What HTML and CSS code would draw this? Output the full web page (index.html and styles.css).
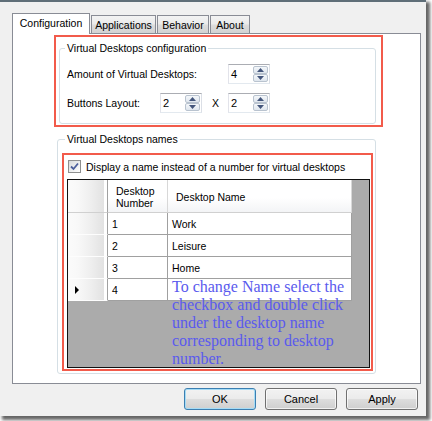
FILE: index.html
```html
<!DOCTYPE html>
<html>
<head>
<meta charset="utf-8">
<link rel="stylesheet" href="styles.css">
</head>
<body>
<div class="window">
  <div class="tabs">
    <div class="tab tab-active">Configuration</div>
    <div class="tab tab-apps">Applications</div>
    <div class="tab tab-beh">Behavior</div>
    <div class="tab tab-about">About</div>
  </div>
  <div class="panel">
    <div class="mark mark-config">
      <fieldset class="group group-config">
        <legend>Virtual Desktops configuration</legend>
        <div class="form-grid">
          <span class="lbl lbl-amount">Amount of Virtual Desktops:</span>
          <div class="spin spin-amount">
            <span class="spin-val">4</span>
            <span class="spin-btns">
              <span class="spin-btn"><svg width="7" height="4" viewBox="0 0 7 4"><path d="M3.5 0 L7 4 H0 Z"/></svg></span>
              <span class="spin-btn"><svg width="7" height="4" viewBox="0 0 7 4"><path d="M0 0 H7 L3.5 4 Z"/></svg></span>
            </span>
          </div>
          <span class="lbl">Buttons Layout:</span>
          <div class="spin">
            <span class="spin-val">2</span>
            <span class="spin-btns">
              <span class="spin-btn"><svg width="7" height="4" viewBox="0 0 7 4"><path d="M3.5 0 L7 4 H0 Z"/></svg></span>
              <span class="spin-btn"><svg width="7" height="4" viewBox="0 0 7 4"><path d="M0 0 H7 L3.5 4 Z"/></svg></span>
            </span>
          </div>
          <span class="times">X</span>
          <div class="spin">
            <span class="spin-val">2</span>
            <span class="spin-btns">
              <span class="spin-btn"><svg width="7" height="4" viewBox="0 0 7 4"><path d="M3.5 0 L7 4 H0 Z"/></svg></span>
              <span class="spin-btn"><svg width="7" height="4" viewBox="0 0 7 4"><path d="M0 0 H7 L3.5 4 Z"/></svg></span>
            </span>
          </div>
        </div>
      </fieldset>
    </div>
    <fieldset class="group group-names">
      <legend>Virtual Desktops names</legend>
      <div class="mark mark-names">
        <div class="check-row">
          <span class="checkbox"><svg width="11" height="11" viewBox="0 0 11 11"><path d="M2 5.5 L4.5 8 L9 2.5" fill="none" stroke="#4c5f9c" stroke-width="1.8"/></svg></span>
          <span class="check-label">Display a name instead of a number for virtual desktops</span>
        </div>
        <div class="dgv">
          <div class="dgv-table">
            <div class="cell rhead corner"></div>
            <div class="cell hcell">Desktop<br>Number</div>
            <div class="cell hcell">Desktop Name</div>

            <div class="cell rhead"></div>
            <div class="cell">1</div>
            <div class="cell">Work</div>

            <div class="cell rhead"></div>
            <div class="cell">2</div>
            <div class="cell">Leisure</div>

            <div class="cell rhead"></div>
            <div class="cell">3</div>
            <div class="cell">Home</div>

            <div class="cell rhead"><svg width="4" height="8" viewBox="0 0 4 8"><path d="M0 0 L4 4 L0 8 Z"/></svg></div>
            <div class="cell">4</div>
            <div class="cell"></div>
          </div>
          <div class="note">To change Name select the checkbox and double click under the desktop name corresponding to desktop number.</div>
        </div>
      </div>
    </fieldset>
  </div>
  <div class="buttons">
    <div class="btn btn-default">OK</div>
    <div class="btn">Cancel</div>
    <div class="btn">Apply</div>
  </div>
</div>
</body>
</html>
```
FILE: styles.css
```css
* { box-sizing: border-box; }
html, body { margin: 0; padding: 0; background: #fff; }
body {
  width: 432px;
  height: 421px;
  overflow: hidden;
  font-family: "Liberation Sans", Arial, sans-serif;
  font-size: 10.5px;
  line-height: 12px;
  color: #000;
}
.window {
  width: 426px;
  height: 416px;
  background: #f0f0f0;
  border-top: 2px solid #5f6e78;
  padding: 11px 5px 0 12px;
  box-shadow: 3px 3px 3px 1px rgba(0,0,0,0.6);
}
.tabs {
  display: flex;
  align-items: flex-end;
  height: 20px;
}
.tab {
  border: 1px solid #898c95;
  border-bottom: none;
  text-align: center;
  padding-top: 3px;
  height: 18px;
  margin-left: 1px;
  background: linear-gradient(#f3f3f3 0%, #ebebeb 45%, #dcdcdc 55%, #d2d2d2 100%);
}
.tab-active {
  position: relative;
  z-index: 1;
  width: 78px;
  height: 21px;
  margin-left: 0;
  margin-bottom: -1px;
  background: #fff;
  padding-top: 3px;
}
.tab-apps { width: 65px; }
.tab-beh { width: 52px; }
.tab-about { width: 40px; }

.panel {
  height: 351px;
  border: 1px solid #898c95;
  background: #fff;
  padding-top: 1px;
}
.mark {
  border: 2px solid #f25b4b;
}
.mark-config {
  width: 329px;
  margin-left: 41px;
  padding: 5px 5px 1px 3px;
}
.group {
  margin: 0;
  border: 1px solid #d5dfe5;
  border-radius: 3px;
  min-inline-size: 0;
}
.group legend {
  padding: 0 2px;
  line-height: 12px;
}
.group-config {
  padding: 10px 0 10px 7px;
}
.group-config legend { margin-left: -2px; }
.form-grid {
  display: grid;
  grid-template-columns: 93px 42px 26px 42px;
  grid-template-rows: 20px 20px;
  row-gap: 9px;
  align-items: center;
}
.lbl-amount { grid-column: 1 / 4; }
.times { text-align: center; padding-left: 1px; }
.spin {
  width: 42px;
  height: 20px;
  border: 1px solid #abadb3;
  border-color: #abadb3 #dbdfe6 #e3e9ef #e2e3ea;
  background: #fff;
  display: flex;
}
.spin-val {
  flex: 1;
  padding-left: 2px;
  line-height: 18px;
  font-size: 11px;
}
.spin-btns {
  width: 16px;
  display: flex;
  flex-direction: column;
  padding: 1px 1px 1px 0;
  gap: 0;
}
.spin-btn {
  flex: 1;
  display: flex;
  align-items: center;
  justify-content: center;
  border: 1px solid #b9c3cf;
  border-radius: 2px;
  background: linear-gradient(#f4f7fa, #dfe6ee);
}
.spin-btn svg { fill: #44567c; }

.group-names {
  margin-top: 6px;
  margin-left: 44px;
  width: 319px;
  padding: 8px 2px 2px 4px;
}
.group-names legend { margin-left: 3px; }
.mark-names {
  width: 311px;
  height: 218px;
  padding: 5px 0 0 3px;
}
.check-row {
  display: flex;
  align-items: center;
  height: 13px;
}
.checkbox {
  width: 13px;
  height: 13px;
  margin-left: 1px;
  border: 1px solid #8e8f8f;
  background: linear-gradient(135deg, #d8dadc, #ffffff);
  display: flex;
  align-items: center;
  justify-content: center;
}
.check-label {
  margin-left: 5px;
  padding-top: 1px;
}
.dgv {
  position: relative;
  margin-top: 6px;
  width: 303px;
  height: 189px;
  border: 1px solid #111;
  background: #ababab;
}
.dgv-table {
  display: grid;
  grid-template-columns: 40px 60px 184px;
  grid-template-rows: 33px 22px 22px 22px 22px;
  width: 284px;
}
.cell {
  background: #fff;
  border-right: 1px solid #a0a0a0;
  border-bottom: 1px solid #a0a0a0;
  display: flex;
  align-items: center;
  padding-left: 4px;
  padding-top: 1px;
  font-size: 10.5px;
}
.hcell {
  background: linear-gradient(#ffffff, #ffffff 55%, #f3f4f6);
  border-right: 1px solid #d8d8d8;
  border-bottom: 1px solid #d0d0d0;
  padding-left: 8px;
}
.rhead {
  background: linear-gradient(to right, #fbfbfb 0%, #f8f8f8 25%, #eeeeee 60%, #e2e2e2 92%, #ffffff 93%);
  border-bottom: 1px solid #fdfdfd;
  border-right: 1px solid #a0a0a0;
  padding-left: 7px;
}
.corner { border-bottom: 1px solid #d0d0d0; }
.rhead svg { fill: #000; }
.note {
  position: absolute;
  left: 104px;
  top: 98px;
  width: 180px;
  font-family: "Liberation Serif", "Times New Roman", serif;
  font-size: 16px;
  line-height: 18px;
  color: #5a5aee;
}

.buttons {
  display: flex;
  justify-content: flex-end;
  gap: 9px;
  margin-top: 4px;
  padding-right: 3px;
}
.btn {
  width: 72px;
  height: 22px;
  border: 1px solid #707070;
  border-radius: 3px;
  background: linear-gradient(#f2f2f2 0%, #ebebeb 48%, #dddddd 52%, #cfcfcf 100%);
  box-shadow: inset 0 0 0 1px rgba(255,255,255,0.7);
  text-align: center;
  line-height: 20px;
  font-size: 11px;
}
.btn-default {
  border-color: #3c7fb1;
  box-shadow: inset 0 0 0 1px #a6dcf6;
}
```
